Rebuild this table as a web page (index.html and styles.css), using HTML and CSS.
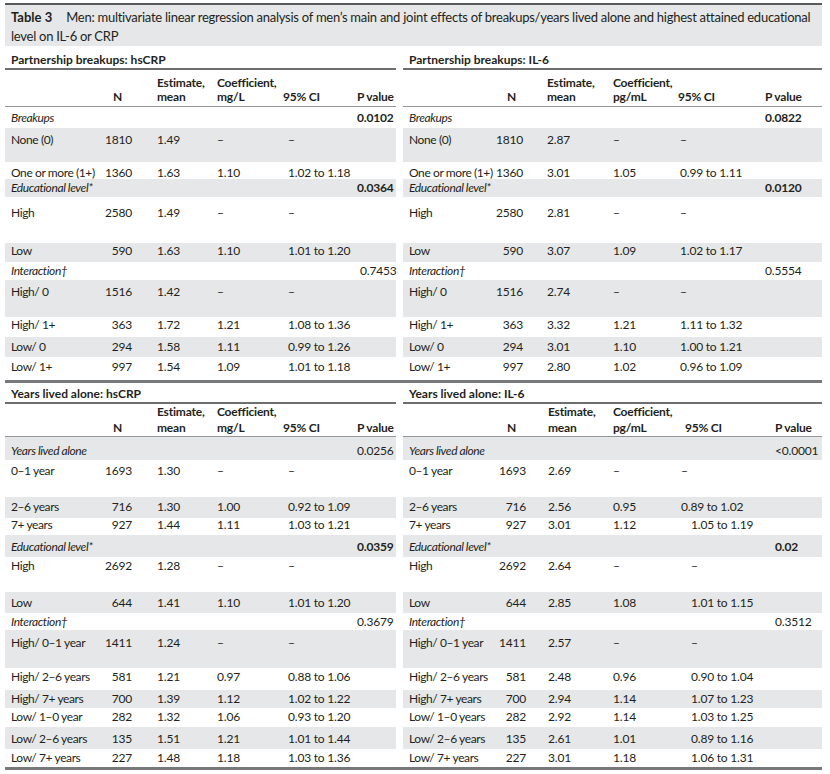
FILE: index.html
```html
<!DOCTYPE html>
<html lang="en">
<head>
<meta charset="utf-8">
<title>Table 3</title>
<link rel="stylesheet" href="styles.css">
</head>
<body>
<div class="sheet">
  <div class="caption"><span class="num">Table 3</span>Men: multivariate linear regression analysis of men’s main and joint effects of breakups/years lived alone and highest attained educational<br>level on IL-6 or CRP</div>

  <div class="section top">
    <div class="panel pl">
      <div class="heading">Partnership breakups: hsCRP</div>
      <div class="row thead"><span></span><span>N</span><span>Estimate,<br>mean</span><span>Coefficient,<br>mg/L</span><span>95% CI</span><span>P value</span></div>
      <div class="row h21 t4"><span class="it">Breakups</span><span></span><span></span><span></span><span></span><span class="b">0.0102</span></div>
      <div class="row g h34 t5"><span>None (0)</span><span>1810</span><span>1.49</span><span>–</span><span>–</span><span></span></div>
      <div class="row h17 t4"><span>One or more (1+)</span><span>1360</span><span>1.63</span><span>1.10</span><span>1.02 to 1.18</span><span></span></div>
      <div class="row g h18 t2"><span class="it">Educational level*</span><span></span><span></span><span></span><span></span><span class="b">0.0364</span></div>
      <div class="row h46 t9"><span>High</span><span>2580</span><span>1.49</span><span>–</span><span>–</span><span></span></div>
      <div class="row g h19 t1"><span>Low</span><span>590</span><span>1.63</span><span>1.10</span><span>1.01 to 1.20</span><span></span></div>
      <div class="row h18 t2"><span class="it">Interaction†</span><span></span><span></span><span></span><span></span><span class="nudge">0.7453</span></div>
      <div class="row g h37 t5"><span>High/ 0</span><span>1516</span><span>1.42</span><span>–</span><span>–</span><span></span></div>
      <div class="row h20 t1"><span>High/ 1+</span><span>363</span><span>1.72</span><span>1.21</span><span>1.08 to 1.36</span><span></span></div>
      <div class="row g h20 t3"><span>Low/ 0</span><span>294</span><span>1.58</span><span>1.11</span><span>0.99 to 1.26</span><span></span></div>
      <div class="row h23 t3"><span>Low/ 1+</span><span>997</span><span>1.54</span><span>1.09</span><span>1.01 to 1.18</span><span></span></div>
    </div>
    <div class="panel pr1">
      <div class="heading">Partnership breakups: IL-6</div>
      <div class="row thead"><span></span><span>N</span><span>Estimate,<br>mean</span><span>Coefficient,<br>pg/mL</span><span>95% CI</span><span>P value</span></div>
      <div class="row h21 t4"><span class="it">Breakups</span><span></span><span></span><span></span><span></span><span class="b">0.0822</span></div>
      <div class="row g h34 t5"><span>None (0)</span><span>1810</span><span>2.87</span><span>–</span><span>–</span><span></span></div>
      <div class="row h17 t4"><span>One or more (1+)</span><span>1360</span><span>3.01</span><span>1.05</span><span>0.99 to 1.11</span><span></span></div>
      <div class="row g h18 t2"><span class="it">Educational level*</span><span></span><span></span><span></span><span></span><span class="b">0.0120</span></div>
      <div class="row h46 t9"><span>High</span><span>2580</span><span>2.81</span><span>–</span><span>–</span><span></span></div>
      <div class="row g h19 t1"><span>Low</span><span>590</span><span>3.07</span><span>1.09</span><span>1.02 to 1.17</span><span></span></div>
      <div class="row h18 t2"><span class="it">Interaction†</span><span></span><span></span><span></span><span></span><span>0.5554</span></div>
      <div class="row g h37 t5"><span>High/ 0</span><span>1516</span><span>2.74</span><span>–</span><span>–</span><span></span></div>
      <div class="row h20 t1"><span>High/ 1+</span><span>363</span><span>3.32</span><span>1.21</span><span>1.11 to 1.32</span><span></span></div>
      <div class="row g h20 t3"><span>Low/ 0</span><span>294</span><span>3.01</span><span>1.10</span><span>1.00 to 1.21</span><span></span></div>
      <div class="row h23 t3"><span>Low/ 1+</span><span>997</span><span>2.80</span><span>1.02</span><span>0.96 to 1.09</span><span></span></div>
    </div>
  </div>

  <div class="section bottom">
    <div class="panel pl">
      <div class="heading">Years lived alone: hsCRP</div>
      <div class="row thead"><span></span><span>N</span><span>Estimate,<br>mean</span><span>Coefficient,<br>mg/L</span><span>95% CI</span><span>P value</span></div>
      <div class="row g h23 t7"><span class="it">Years lived alone</span><span></span><span></span><span></span><span></span><span>0.0256</span></div>
      <div class="row h37 t4"><span>0–1 year</span><span>1693</span><span>1.30</span><span>–</span><span>–</span><span></span></div>
      <div class="row g h21 t3"><span>2–6 years</span><span>716</span><span>1.30</span><span>1.00</span><span>0.92 to 1.09</span><span></span></div>
      <div class="row h17 t0"><span>7+ years</span><span>927</span><span>1.44</span><span>1.11</span><span>1.03 to 1.21</span><span></span></div>
      <div class="row g h22 t5"><span class="it">Educational level*</span><span></span><span></span><span></span><span></span><span class="b">0.0359</span></div>
      <div class="row h35 t2"><span>High</span><span>2692</span><span>1.28</span><span>–</span><span>–</span><span></span></div>
      <div class="row g h21 t4"><span>Low</span><span>644</span><span>1.41</span><span>1.10</span><span>1.01 to 1.20</span><span></span></div>
      <div class="row h17 t2"><span class="it">Interaction†</span><span></span><span></span><span></span><span></span><span>0.3679</span></div>
      <div class="row g h38 t6"><span>High/ 0–1 year</span><span>1411</span><span>1.24</span><span>–</span><span>–</span><span></span></div>
      <div class="row h22 t2"><span>High/ 2–6 years</span><span>581</span><span>1.21</span><span>0.97</span><span>0.88 to 1.06</span><span></span></div>
      <div class="row g h18 t2"><span>High/ 7+ years</span><span>700</span><span>1.39</span><span>1.12</span><span>1.02 to 1.22</span><span></span></div>
      <div class="row h19 t2"><span>Low/ 1–0 year</span><span>282</span><span>1.32</span><span>1.06</span><span>0.93 to 1.20</span><span></span></div>
      <div class="row g h22 t5"><span>Low/ 2–6 years</span><span>135</span><span>1.51</span><span>1.21</span><span>1.01 to 1.44</span><span></span></div>
      <div class="row h18 t2"><span>Low/ 7+ years</span><span>227</span><span>1.48</span><span>1.18</span><span>1.03 to 1.36</span><span></span></div>
    </div>
    <div class="panel pr2">
      <div class="heading">Years lived alone: IL-6</div>
      <div class="row thead"><span></span><span>N</span><span>Estimate,<br>mean</span><span>Coefficient,<br>pg/mL</span><span>95% CI</span><span>P value</span></div>
      <div class="row g h23 t7"><span class="it">Years lived alone</span><span></span><span></span><span></span><span></span><span>&lt;0.0001</span></div>
      <div class="row h37 t4"><span>0–1 year</span><span>1693</span><span>2.69</span><span>–</span><span class="early">–</span><span></span></div>
      <div class="row g h21 t3"><span>2–6 years</span><span>716</span><span>2.56</span><span>0.95</span><span class="early">0.89 to 1.02</span><span></span></div>
      <div class="row h17 t0"><span>7+ years</span><span>927</span><span>3.01</span><span>1.12</span><span>1.05 to 1.19</span><span></span></div>
      <div class="row g h22 t5"><span class="it">Educational level*</span><span></span><span></span><span></span><span></span><span class="b">0.02</span></div>
      <div class="row h35 t2"><span>High</span><span>2692</span><span>2.64</span><span>–</span><span>–</span><span></span></div>
      <div class="row g h21 t4"><span>Low</span><span>644</span><span>2.85</span><span>1.08</span><span>1.01 to 1.15</span><span></span></div>
      <div class="row h17 t2"><span class="it">Interaction†</span><span></span><span></span><span></span><span></span><span>0.3512</span></div>
      <div class="row g h38 t6"><span>High/ 0–1 year</span><span>1411</span><span>2.57</span><span>–</span><span>–</span><span></span></div>
      <div class="row h22 t2"><span>High/ 2–6 years</span><span>581</span><span>2.48</span><span>0.96</span><span>0.90 to 1.04</span><span></span></div>
      <div class="row g h18 t2"><span>High/ 7+ years</span><span>700</span><span>2.94</span><span>1.14</span><span>1.07 to 1.23</span><span></span></div>
      <div class="row h19 t2"><span>Low/ 1–0 years</span><span>282</span><span>2.92</span><span>1.14</span><span>1.03 to 1.25</span><span></span></div>
      <div class="row g h22 t5"><span>Low/ 2–6 years</span><span>135</span><span>2.61</span><span>1.01</span><span>0.89 to 1.16</span><span></span></div>
      <div class="row h18 t2"><span>Low/ 7+ years</span><span>227</span><span>3.01</span><span>1.18</span><span>1.06 to 1.31</span><span></span></div>
    </div>
  </div>
</div>
</body>
</html>
```
FILE: styles.css
```css
body {
  margin: 0;
  background: #ffffff;
  color: #231f20;
  font-family: Lato, "Noto Sans", sans-serif;
  font-size: 12px;
}

.sheet {
  margin: 3px 0 0 5px;
  width: 817px;
  border-top: 2px solid #58595b;
}

.caption {
  box-sizing: border-box;
  height: 41px;
  padding: 3px 6px 0 6px;
  background: #e6e7e8;
  font-size: 13px;
  letter-spacing: -0.26px;
  line-height: 19px;
  white-space: nowrap;
  overflow: hidden;
}

.caption .num {
  font-weight: 700;
  margin-right: 14px;
  letter-spacing: 0;
}

.section {
  display: flex;
  gap: 7px;
  border-bottom: 3px solid #77787b;
}

.pl { width: 391px; }
.pr1, .pr2 { width: 419px; }

.heading {
  box-sizing: border-box;
  padding-left: 6px;
  font-weight: 700;
  line-height: 14px;
  border-bottom: 2px solid #6d6e70;
}

.top .heading { height: 24px; padding-top: 7px; }
.bottom .heading { height: 21px; padding-top: 4px; }

.row {
  display: grid;
  box-sizing: border-box;
  line-height: 14px;
  letter-spacing: -0.2px;
}

.row > span { white-space: nowrap; }
.row > span:first-child { letter-spacing: -0.4px; }

.pl > .row { grid-template-columns: 99px 46px 60px 68px 72px 46px; }
.pr1 > .row, .pr2 > .row { grid-template-columns: 92px 45px 66px 66px 86px 64px; }

.thead {
  font-weight: 700;
  align-items: end;
  border-bottom: 1px solid #939598;
}
.top .thead { height: 37px; padding-bottom: 2px; }
.bottom .thead { height: 33px; line-height: 16px; }

.g { background: #e6e7e8; }
.it { font-style: italic; }
.b { font-weight: 700; }

/* row heights */
.h17 { height: 17px; }
.h18 { height: 18px; }
.h19 { height: 19px; }
.h20 { height: 20px; }
.h21 { height: 21px; }
.h22 { height: 22px; }
.h23 { height: 23px; }
.h34 { height: 34px; }
.h35 { height: 35px; }
.h37 { height: 37px; }
.h38 { height: 38px; }
.h46 { height: 46px; }

/* text offset inside a row */
.t0 { padding-top: 0; }
.t1 { padding-top: 1px; }
.t2 { padding-top: 2px; }
.t3 { padding-top: 3px; }
.t4 { padding-top: 4px; }
.t5 { padding-top: 5px; }
.t6 { padding-top: 6px; }
.t7 { padding-top: 7px; }
.t9 { padding-top: 9px; }

/* left panels */
.pl > .row > :nth-child(1) { padding-left: 6px; }
.pl > .row > :nth-child(2) { text-align: right; padding-right: 18px; }
.pl > .row > :nth-child(3) { padding-left: 7px; }
.pl > .row > :nth-child(4) { padding-left: 7px; }
.pl > .row > :nth-child(5) { padding-left: 10px; }
.pl > .row > :nth-child(6) { padding-left: 7px; }
.pl > .thead > :nth-child(2) { text-align: left; padding-left: 9px; padding-right: 0; }
.pl > .thead > :nth-child(5) { padding-left: 5px; }
.pl > .row > .nudge { padding-left: 10px; }

/* top right panel */
.pr1 > .row > :nth-child(1) { padding-left: 6px; }
.pr1 > .row > :nth-child(2) { text-align: right; padding-right: 17px; }
.pr1 > .row > :nth-child(3) { padding-left: 7px; }
.pr1 > .row > :nth-child(4) { padding-left: 7px; }
.pr1 > .row > :nth-child(5) { padding-left: 8px; }
.pr1 > .row > :nth-child(6) { padding-left: 7px; }
.pr1 > .thead > :nth-child(2) { text-align: left; padding-left: 12px; padding-right: 0; }
.pr1 > .thead > :nth-child(5) { padding-left: 6px; }

/* bottom right panel */
.pr2 > .row > :nth-child(1) { padding-left: 6px; }
.pr2 > .row > :nth-child(2) { text-align: right; padding-right: 14px; }
.pr2 > .row > :nth-child(3) { padding-left: 8px; }
.pr2 > .row > :nth-child(4) { padding-left: 7px; }
.pr2 > .row > :nth-child(5) { padding-left: 19px; }
.pr2 > .row > :nth-child(6) { padding-left: 17px; }
.pr2 > .thead > :nth-child(2) { text-align: left; padding-left: 12px; padding-right: 0; }
.pr2 > .thead > :nth-child(5) { padding-left: 13px; }
.pr2 > .row > .early { padding-left: 9px; }
```
